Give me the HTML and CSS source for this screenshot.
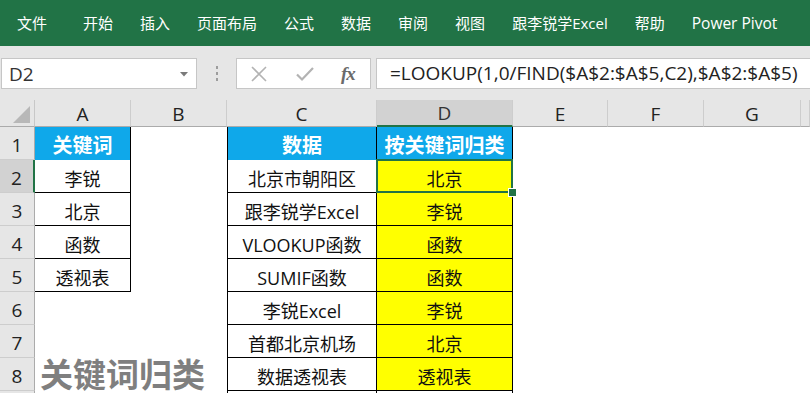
FILE: index.html
```html
<!DOCTYPE html>
<html lang="zh-CN">
<head>
<meta charset="utf-8">
<title>Excel</title>
<link rel="stylesheet" href="styles.css">
</head>
<body>
<div class="app">
  <div class="ribbon">
    <span class="tab first">文件</span>
    <span class="tab">开始</span>
    <span class="tab">插入</span>
    <span class="tab">页面布局</span>
    <span class="tab">公式</span>
    <span class="tab">数据</span>
    <span class="tab">审阅</span>
    <span class="tab">视图</span>
    <span class="tab">跟李锐学Excel</span>
    <span class="tab">帮助</span>
    <span class="tab">Power Pivot</span>
  </div>
  <div class="toolbar">
    <div class="namebox">
      <span class="name">D2</span>
      <svg class="caret" width="8" height="5" viewBox="0 0 8 5"><path d="M0 0H8L4 4.5Z" fill="#7a7a7a"/></svg>
    </div>
    <div class="grip"><i></i><i></i><i></i></div>
    <div class="fxbox">
      <svg class="ic" width="18" height="18" viewBox="0 0 18 18"><path d="M2 2L16 16M16 2L2 16" stroke="#b3b3b3" stroke-width="1.6" fill="none"/></svg>
      <svg class="ic" width="20" height="18" viewBox="0 0 20 18"><path d="M2 9.5L7 14.5L18 3" stroke="#b3b3b3" stroke-width="2.2" fill="none"/></svg>
      <span class="fx">fx</span>
    </div>
    <div class="formula">=LOOKUP(1,0/FIND($A$2:$A$5,C2),$A$2:$A$5)</div>
  </div>
  <div class="sheet">
    <div class="corner"><svg width="17" height="17" viewBox="0 0 17 17"><path d="M17 0V17H0Z" fill="#b8b8b8"/></svg></div>
    <div class="ch">A</div>
    <div class="ch">B</div>
    <div class="ch">C</div>
    <div class="ch sel">D</div>
    <div class="ch">E</div>
    <div class="ch">F</div>
    <div class="ch">G</div>
    <div class="ch last"></div>

    <div class="rh">1</div>
    <div class="c hd br">关键词</div>
    <div class="c"></div>
    <div class="c hd bl br">数据</div>
    <div class="c hd br">按关键词归类</div>
    <div class="c"></div><div class="c"></div><div class="c"></div><div class="c"></div>

    <div class="rh sel">2</div>
    <div class="c br bb">李锐</div>
    <div class="c"></div>
    <div class="c bl br bb">北京市朝阳区</div>
    <div class="c y br bb active">北京</div>
    <div class="c"></div><div class="c"></div><div class="c"></div><div class="c"></div>

    <div class="rh">3</div>
    <div class="c br bb">北京</div>
    <div class="c"></div>
    <div class="c bl br bb">跟李锐学Excel</div>
    <div class="c y br bb">李锐</div>
    <div class="c"></div><div class="c"></div><div class="c"></div><div class="c"></div>

    <div class="rh">4</div>
    <div class="c br bb">函数</div>
    <div class="c"></div>
    <div class="c bl br bb">VLOOKUP函数</div>
    <div class="c y br bb">函数</div>
    <div class="c"></div><div class="c"></div><div class="c"></div><div class="c"></div>

    <div class="rh">5</div>
    <div class="c br bb">透视表</div>
    <div class="c"></div>
    <div class="c bl br bb">SUMIF函数</div>
    <div class="c y br bb">函数</div>
    <div class="c"></div><div class="c"></div><div class="c"></div><div class="c"></div>

    <div class="rh">6</div>
    <div class="c"></div>
    <div class="c"></div>
    <div class="c bl br bb">李锐Excel</div>
    <div class="c y br bb">李锐</div>
    <div class="c"></div><div class="c"></div><div class="c"></div><div class="c"></div>

    <div class="rh">7</div>
    <div class="c"></div>
    <div class="c"></div>
    <div class="c bl br bb">首都北京机场</div>
    <div class="c y br bb">北京</div>
    <div class="c"></div><div class="c"></div><div class="c"></div><div class="c"></div>

    <div class="rh">8</div>
    <div class="c title">关键词归类</div>
    <div class="c bl br bb">数据透视表</div>
    <div class="c y br bb">透视表</div>
    <div class="c"></div><div class="c"></div><div class="c"></div><div class="c"></div>

    <div class="rh"></div>
    <div class="c"></div>
    <div class="c"></div>
    <div class="c bl br bb"></div>
    <div class="c br bb"></div>
    <div class="c"></div><div class="c"></div><div class="c"></div><div class="c"></div>
  </div>
</div>
</body>
</html>
```
FILE: styles.css
```css
* { box-sizing: border-box; }
html, body { margin: 0; padding: 0; }
body {
  width: 810px;
  height: 393px;
  overflow: hidden;
  background: #ffffff;
  font-family: "Open Sans", "Noto Sans CJK SC", sans-serif;
  color: #222;
}
.app { width: 810px; height: 393px; overflow: hidden; display: flex; flex-direction: column; }

.ribbon {
  height: 46px;
  flex: none;
  background: #217346;
  display: flex;
  align-items: center;
  gap: 27px;
  padding-left: 17px;
  padding-bottom: 1px;
  color: #fff;
  font-size: 15px;
  white-space: nowrap;
}
.tab { line-height: 20px; }
.tab.first { margin-right: 9px; }
.tab:last-child { font-size: 15.5px; }

.toolbar {
  height: 54px;
  flex: none;
  background: #e6e6e6;
  display: flex;
  align-items: flex-start;
  padding-top: 12px;
}
.namebox {
  width: 196px;
  height: 31px;
  margin-left: 1px;
  background: #fff;
  border: 1px solid #c6c6c6;
  display: flex;
  align-items: center;
  justify-content: space-between;
  padding: 0 8px 0 7px;
}
.name { font-size: 19px; color: #333; line-height: 28px; }
.caret { margin-top: 1px; }
.grip {
  width: 39px;
  height: 31px;
  display: flex;
  flex-direction: column;
  align-items: center;
  justify-content: center;
  gap: 3px;
}
.grip i { display: block; width: 2px; height: 3px; background: #9d9d9d; }
.fxbox {
  width: 135px;
  height: 31px;
  background: #fff;
  border: 1px solid #c6c6c6;
  display: flex;
  align-items: center;
  padding-left: 13px;
  gap: 27px;
}
.fx {
  font-family: "Liberation Serif", "DejaVu Serif", serif;
  font-style: italic;
  font-weight: bold;
  font-size: 19px;
  color: #6b6b6b;
  letter-spacing: -1px;
  margin-left: -1px;
}
.formula {
  flex: 1;
  height: 31px;
  margin-left: 5px;
  background: #fff;
  border: 1px solid #c6c6c6;
  border-right: none;
  padding-left: 13px;
  font-size: 19px;
  line-height: 29px;
  color: #222;
  white-space: nowrap;
  overflow: hidden;
}

.sheet {
  flex: none;
  display: grid;
  grid-template-columns: 35px 96px 96px 150px 136px 95px 96px 97px 9px;
  grid-template-rows: 27px repeat(9, 33px);
  background: #fff;
}
.corner {
  background: #e6e6e6;
  border-right: 1px solid #c8c8c8;
  border-bottom: 1px solid #ababab;
  display: flex;
  align-items: flex-end;
  justify-content: flex-end;
  padding: 0 4px 3px 0;
}
.ch {
  background: #e6e6e6;
  border-right: 1px solid #cdcdcd;
  border-bottom: 1px solid #ababab;
  display: flex;
  align-items: center;
  justify-content: center;
  font-size: 19px;
  color: #222;
  padding-top: 1px;
}
.ch.sel {
  background: #d2d2d2;
  border-bottom: 2px solid #217346;
  color: #333;
}
.rh {
  background: #e6e6e6;
  border-right: 1px solid #ababab;
  border-bottom: 1px solid #cdcdcd;
  display: flex;
  align-items: center;
  justify-content: center;
  font-size: 19px;
  color: #222;
  padding-top: 3px;
}
.rh.sel {
  background: #d2d2d2;
  border-right: 2px solid #217346;
}
.c {
  display: flex;
  align-items: center;
  justify-content: center;
  font-size: 18px;
  white-space: nowrap;
  padding-top: 3px;
  color: #111;
}
.hd {
  background: #0fa8ea;
  color: #fff;
  font-weight: bold;
  font-size: 20px;
  padding-top: 1px;
}
.y { background: #ffff00; }
.br { border-right: 1px solid #000; }
.bb { border-bottom: 1px solid #000; }
.bl { border-left: 1px solid #000; }
.active { position: relative; }
.active::before {
  content: "";
  position: absolute;
  left: -1px;
  top: -1px;
  right: -1px;
  bottom: -1px;
  border: 2px solid #217346;
}
.active::after {
  content: "";
  position: absolute;
  right: -5px;
  bottom: -5px;
  width: 7px;
  height: 7px;
  background: #217346;
  border: 1px solid #fff;
}
.title {
  grid-column: span 2;
  justify-content: flex-start;
  font-size: 33px;
  line-height: 32px;
  font-weight: bold;
  color: #7f7f7f;
  padding: 0 0 0 5px;
}
```
